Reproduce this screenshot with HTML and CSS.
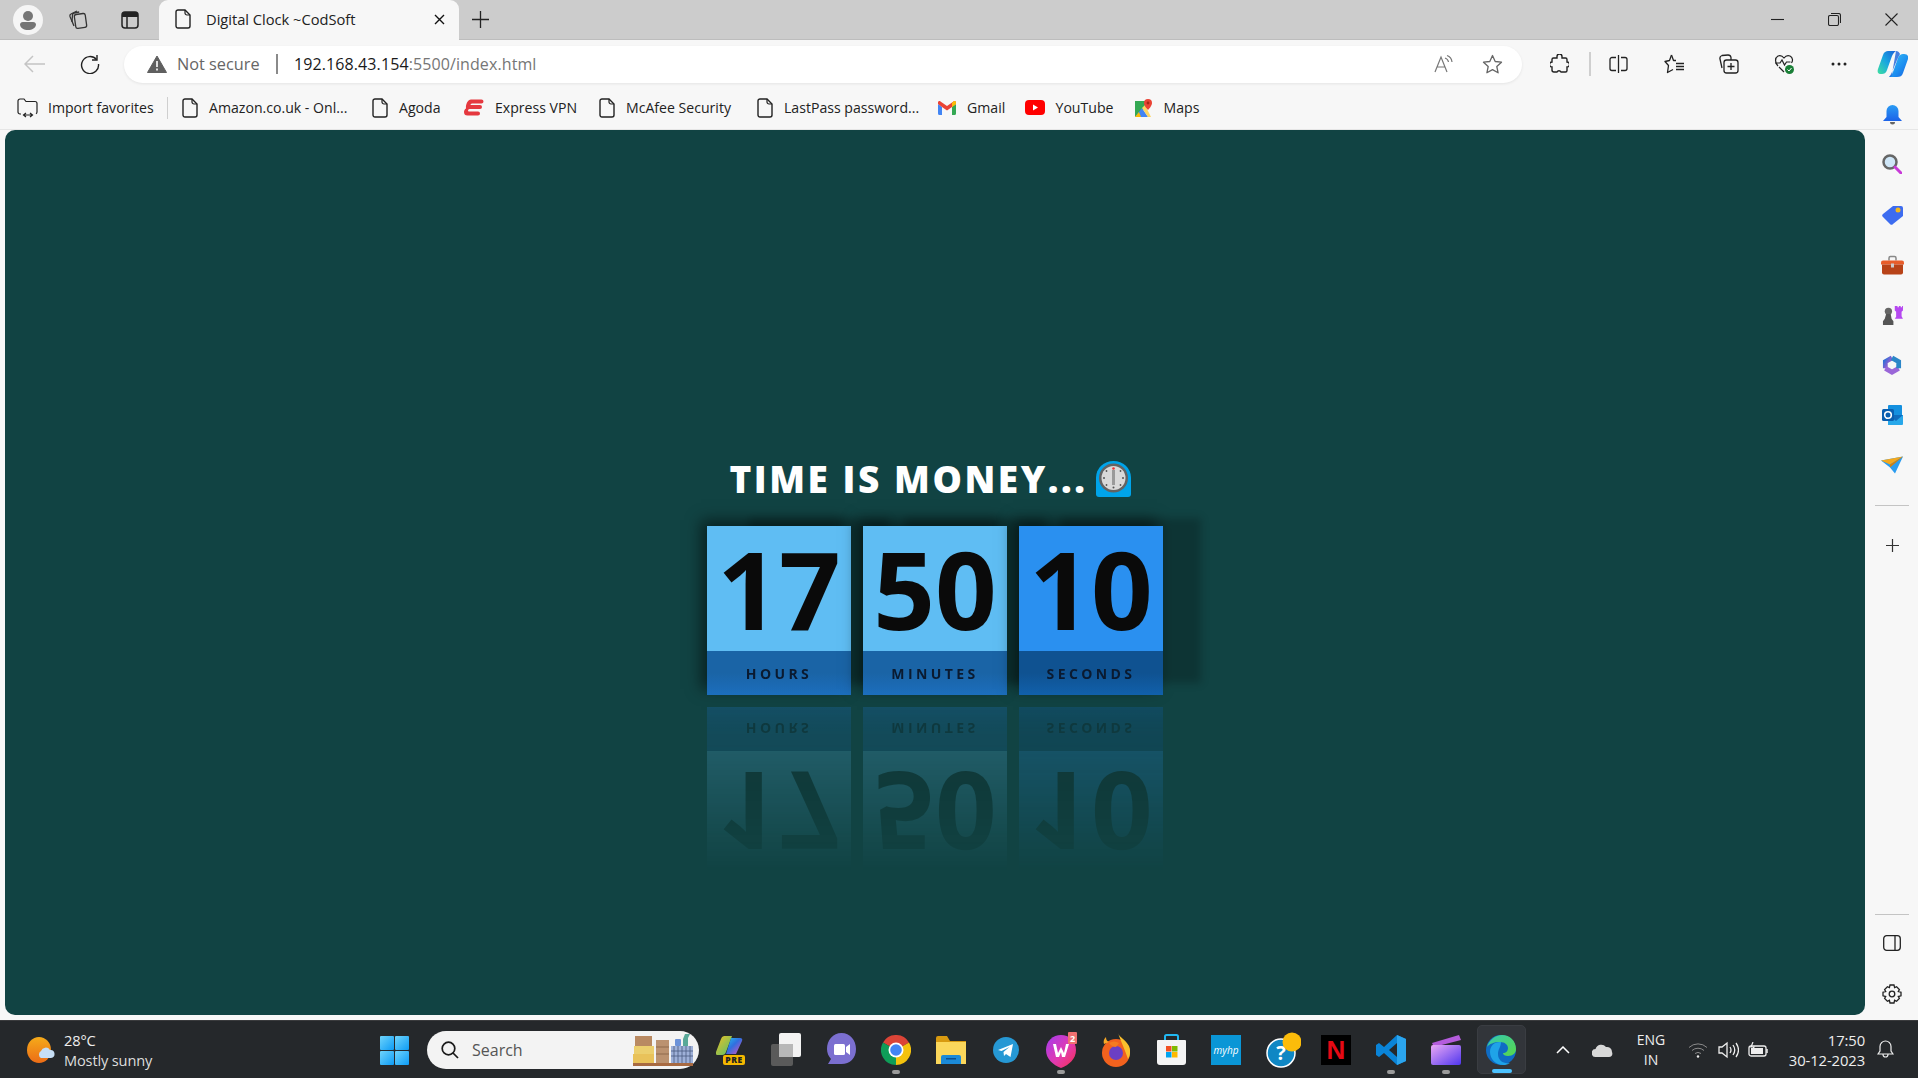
FILE: index.html
```html
<!DOCTYPE html>
<html lang="en">
<head>
<meta charset="utf-8">
<title>Digital Clock ~CodSoft</title>
<link rel="stylesheet" href="styles.css">
</head>
<body>
<svg class="defs" width="0" height="0" aria-hidden="true">
  <defs>
    <symbol id="doc" viewBox="0 0 16 20"><path d="M3 1h7l5 5v11a2 2 0 0 1-2 2H3a2 2 0 0 1-2-2V3a2 2 0 0 1 2-2z" fill="none" stroke="#222" stroke-width="1.4"/><path d="M10 1v3a2 2 0 0 0 2 2h3" fill="none" stroke="#222" stroke-width="1.2"/></symbol>
    <linearGradient id="gCop" x1="0" y1="1" x2="1" y2="0"><stop offset="0" stop-color="#3fe0a0"/><stop offset=".5" stop-color="#18a6e0"/><stop offset="1" stop-color="#1a5fd8"/></linearGradient>
    <linearGradient id="gCop2" x1="0" y1="0" x2="1" y2="1"><stop offset="0" stop-color="#39c4f4"/><stop offset=".6" stop-color="#1c8ef0"/><stop offset="1" stop-color="#1b5fdc"/></linearGradient>
    <linearGradient id="gBell" x1="0" y1="0" x2="0" y2="1"><stop offset="0" stop-color="#2a9cf4"/><stop offset="1" stop-color="#1c62e8"/></linearGradient>
    <linearGradient id="gWin" x1="0" y1="0" x2="1" y2="1"><stop offset="0" stop-color="#6fd4fb"/><stop offset="1" stop-color="#0d9bf5"/></linearGradient>
    <linearGradient id="gWea" x1="0" y1="0" x2="0" y2="1"><stop offset="0" stop-color="#f5ab1a"/><stop offset="1" stop-color="#ec6c16"/></linearGradient>
    <linearGradient id="gWps" x1="0" y1="0" x2="1" y2="1"><stop offset="0" stop-color="#a23cf0"/><stop offset=".55" stop-color="#e23ab0"/><stop offset="1" stop-color="#f5304f"/></linearGradient>
    <linearGradient id="gClip" x1="0" y1="0" x2="1" y2="1"><stop offset="0" stop-color="#eba8f5"/><stop offset="1" stop-color="#4f36ee"/></linearGradient>
    <linearGradient id="gEdge" x1="0" y1="0" x2="1" y2="1"><stop offset="0" stop-color="#35c8b0"/><stop offset="1" stop-color="#58d84a"/></linearGradient>
    <linearGradient id="gPre" x1="0" y1="0" x2="1" y2="1"><stop offset="0" stop-color="#28c0e8"/><stop offset=".45" stop-color="#2f6fe0"/><stop offset="1" stop-color="#e050c0"/></linearGradient>
    <linearGradient id="gPre2" x1="0" y1="0" x2="1" y2="1"><stop offset="0" stop-color="#f0c020"/><stop offset="1" stop-color="#50c070"/></linearGradient>
    <linearGradient id="gMs" x1="0" y1="0" x2="1" y2="1"><stop offset="0" stop-color="#2a70d8"/><stop offset=".5" stop-color="#8a60d0"/><stop offset="1" stop-color="#28b0d8"/></linearGradient>
  </defs>
</svg>

<div class="window">
  <header class="tabstrip">
    <div class="avatar"><svg width="30" height="30" viewBox="0 0 30 30"><circle cx="15" cy="15" r="15" fill="#f5f5f5"/><circle cx="15" cy="11" r="5" fill="#767676"/><path d="M7 19a3 3 0 0 1 3-2h10a3 3 0 0 1 3 2c0 4-4 6-8 6s-8-2-8-6z" fill="#767676"/></svg></div>
    <svg class="ws-icon" width="21" height="21" viewBox="0 0 21 21" fill="none" stroke="#333" stroke-width="1.3"><rect x="8" y="5" width="11" height="14" rx="2" transform="rotate(-8 13 12)"/><path d="M7 17 3 7.5a2 2 0 0 1 1-2.5l6-3"/><path d="M5 13 5.500 6a2 2 0 0 1 1.700-2l5-1"/></svg>
    <svg class="tl-icon" width="18" height="18" viewBox="0 0 18 18"><rect x="1" y="1" width="16" height="16" rx="3" fill="none" stroke="#222" stroke-width="1.500"/><path d="M1 4a3 3 0 0 1 3-3h10a3 3 0 0 1 3 3v2H1z" fill="#222"/><path d="M6 6v11" stroke="#222" stroke-width="1.500"/></svg>
    <div class="tab">
      <svg class="tab-doc" width="16" height="20"><use href="#doc"/></svg>
      <span class="tab-title">Digital Clock ~CodSoft</span>
      <svg class="tab-close" width="11" height="11" viewBox="0 0 11 11"><path d="M1 1l9 9M10 1l-9 9" stroke="#111" stroke-width="1.400"/></svg>
    </div>
    <svg class="tab-new" width="17" height="17" viewBox="0 0 17 17"><path d="M8.500 0v17M0 8.500h17" stroke="#222" stroke-width="1.300"/></svg>
    <div class="win-controls">
      <svg width="13" height="13" viewBox="0 0 13 13"><path d="M0 6.500h13" stroke="#222" stroke-width="1.100"/></svg>
      <svg width="13" height="13" viewBox="0 0 13 13" fill="none" stroke="#222" stroke-width="1.100"><rect x=".5" y="2.500" width="10" height="10" rx="1.500"/><path d="M3 .5h7.500a2 2 0 0 1 2 2V10"/></svg>
      <svg width="13" height="13" viewBox="0 0 13 13"><path d="M.5.5l12 12M12.500.5l-12 12" stroke="#222" stroke-width="1.100"/></svg>
    </div>
  </header>

  <nav class="toolbar">
    <svg class="tb-back" width="21" height="18" viewBox="0 0 21 18"><path d="M21 9H1M9 1 1 9l8 8" fill="none" stroke="#c4c4c4" stroke-width="1.500"/></svg>
    <svg class="tb-reload" width="20" height="20" viewBox="0 0 20 20" fill="none" stroke="#222" stroke-width="1.400"><path d="M16.500 5.500A8.500 8.500 0 1 0 18.500 10"/><path d="M17 1v5h-5"/></svg>
    <div class="address">
      <svg class="addr-warn" width="20" height="18" viewBox="0 0 20 18"><path d="M10 1 19.500 17.500H.5z" fill="#5f5f5f" stroke="#5f5f5f" stroke-linejoin="round"/><path d="M10 6v6M10 13.500v2" stroke="#fff" stroke-width="1.600"/></svg>
      <span class="addr-note">Not secure</span>
      <span class="addr-sep"></span>
      <span class="addr-url"><b class="addr-host">192.168.43.154</b>:5500/index.html</span>
      <svg class="addr-read" width="20" height="20" viewBox="0 0 20 20" fill="none" stroke="#777" stroke-width="1.200"><path d="M1 18 7 3l6 15M3.500 13h7"/><path d="M11 4q3 1 3.500 4M13 1.500q4.500 1.500 5 6.500"/></svg>
      <svg class="addr-star" width="21" height="20" viewBox="0 0 21 20"><path d="M10.500 1.500 13.200 7.500l6.300.7-4.700 4.300 1.300 6.300-5.600-3.200-5.600 3.200 1.300-6.300L1.500 8.200l6.300-.7z" fill="none" stroke="#666" stroke-width="1.300" stroke-linejoin="round"/></svg>
    </div>
    <svg class="tb-ext" width="19" height="20" viewBox="0 0 19 20"><path d="M7 2.500a2.500 2.500 0 0 1 5 0V4h3.500a1.500 1.500 0 0 1 1.500 1.500V8a2.500 2.500 0 0 1 0 5v3.500a1.500 1.500 0 0 1-1.500 1.500H11a2.200 2.200 0 0 0-4 0H4a2 2 0 0 1-2-2v-3a2.500 2.500 0 0 1 0-5V5.500A1.500 1.500 0 0 1 3.500 4H7z" fill="none" stroke="#222" stroke-width="1.400"/></svg>
    <span class="tb-sep"></span>
    <svg class="tb-split" width="19" height="20" viewBox="0 0 19 20" fill="none" stroke="#222" stroke-width="1.300"><path d="M7 3.500H3a2 2 0 0 0-2 2v9a2 2 0 0 0 2 2h4M12 3.500h4a2 2 0 0 1 2 2v9a2 2 0 0 1-2 2h-4M9.500 1v18"/></svg>
    <svg class="tb-fav" width="20" height="20" viewBox="0 0 20 20" fill="none" stroke="#222" stroke-width="1.300" stroke-linejoin="round"><path d="M7.500 1 5.500 6.500 1 7.500l3.500 4L3.500 18.500l5.500-3"/><path d="M7.500 1 9.500 6.500h2.500"/><path d="M12 9.500h8M12 12.500h8M12 15.500h8"/></svg>
    <svg class="tb-coll" width="20" height="20" viewBox="0 0 20 20" fill="none" stroke="#222" stroke-width="1.300"><rect x="5" y="6" width="14" height="13" rx="2.500"/><path d="M3 14 1 5a3 3 0 0 1 2-3.500L9 1a3 3 0 0 1 3 2.500V6M12 9v7M8.500 12.500h7"/></svg>
    <svg class="tb-health" width="20" height="20" viewBox="0 0 20 20"><path d="M4 12C1 9 .5 4 4 2c2.500-1 4.500 0 6 2 1.500-2 3.500-3 6-2 3 1.500 3 5 1.500 7M1 9h5l2-3 2.500 5 2-3h4M5 13l5 5" fill="none" stroke="#222" stroke-width="1.200"/><circle cx="15.500" cy="15.500" r="4.500" fill="#1a7f37"/><path d="M13.500 15.500l1.500 1.500 2.500-3" fill="none" stroke="#fff" stroke-width="1"/></svg>
    <svg class="tb-more" width="16" height="4" viewBox="0 0 16 4"><circle cx="2" cy="2" r="1.500" fill="#222"/><circle cx="8" cy="2" r="1.500" fill="#222"/><circle cx="14" cy="2" r="1.500" fill="#222"/></svg>
    <svg class="tb-copilot" width="31" height="28" viewBox="0 0 31 28"><path d="M11 1h8c-2 1-3 3-4 5L10 20c-1 3-3 4-5 4H4c-3 0-4-2-3-5L6 5c1-3 3-4 5-4z" fill="url(#gCop)"/><path d="M20 27h-8c2-1 3-3 4-5l5-14c1-3 3-4 5-4h1c3 0 5 2 4 5l-5 14c-1 3-3 4-6 4z" fill="url(#gCop2)"/><path d="M19 1c2 0 3 1 4 3l-1 2c-1 1-1 2-2 4l-5 12c-1 2-2 4-3 5 2 0 3-1 3-3z" fill="#1a5fd8" opacity=".8"/></svg>
  </nav>

  <nav class="bookmarks">
    <a class="bm bm-import"><svg width="21" height="20" viewBox="0 0 21 20" fill="none" stroke="#222" stroke-width="1.200"><path d="M4 16H3a2 2 0 0 1-2-2V3a2 2 0 0 1 2-2h4l2 2.500h9a2 2 0 0 1 2 2V14a2 2 0 0 1-1 1.700"/><path d="M7 17h8M9 15l-2.500 2L9 19M13 15l2.500 2L13 19"/></svg><span>Import favorites</span></a>
    <span class="bm-sep"></span>
    <a class="bm bm-amazon"><svg width="16" height="20"><use href="#doc"/></svg><span>Amazon.co.uk - Onl...</span></a>
    <a class="bm bm-agoda"><svg width="16" height="20"><use href="#doc"/></svg><span>Agoda</span></a>
    <a class="bm bm-vpn"><svg width="20" height="17" viewBox="0 0 20 17"><path d="M7 .5h10.500a2 2 0 0 1 0 4H8a1.500 1.500 0 0 0-1.500 1.500H16a2 2 0 0 1 0 4H5.500A1.500 1.500 0 0 0 4 11.500c0 .5.500 1 1 1H14a2 2 0 0 1 0 4H3.500A3.500 3.500 0 0 1 0 13c0-1.500.800-3 2-3.500C1.500 5 4 .5 7 .5z" fill="#e5383f"/></svg><span>Express VPN</span></a>
    <a class="bm bm-mcafee"><svg width="16" height="20"><use href="#doc"/></svg><span>McAfee Security</span></a>
    <a class="bm bm-lastpass"><svg width="16" height="20"><use href="#doc"/></svg><span>LastPass password...</span></a>
    <a class="bm bm-gmail"><svg width="18" height="14" viewBox="0 0 18 14"><path d="M0 3v9.500A1.500 1.500 0 0 0 1.500 14H4V6z" fill="#4285f4"/><path d="M14 14h2.500a1.500 1.500 0 0 0 1.500-1.500V3l-4 3z" fill="#34a853"/><path d="M0 3 4 6l5 3.500L14 6l4-3V1.500C18 .2 16.500-.4 15.500.4L9 5 2.500.4C1.500-.4 0 .2 0 1.500z" fill="#ea4335"/><path d="M14 6V2l1.500-1.600C16.500-.4 18 .2 18 1.500V3z" fill="#fbbc04"/></svg><span>Gmail</span></a>
    <a class="bm bm-yt"><svg width="20" height="15" viewBox="0 0 20 15"><rect width="20" height="15" rx="4" fill="#f00"/><path d="M8 4.500v6l5-3z" fill="#fff"/></svg><span>YouTube</span></a>
    <a class="bm bm-maps"><svg width="18" height="18" viewBox="0 0 18 18"><path d="M0 2h12v6L0 18z" fill="#34a853"/><path d="M0 18 7 9l6 9z" fill="#4285f4"/><path d="M0 18l4-5 2 5z" fill="#fbbc04"/><path d="M7 9l3-3 6 12h-3z" fill="#fdd663"/><path d="M13 0a4 4 0 0 1 4 4c0 3-4 7-4 7s-4-4-4-7a4 4 0 0 1 4-4z" fill="#ea4335"/><circle cx="13" cy="4" r="1.400" fill="#a52714"/></svg><span>Maps</span></a>
  </nav>

  <div class="body-row">
    <main class="page">
      <h1 class="headline">TIME IS MONEY...<svg class="timer" width="35" height="36" viewBox="0 0 35 36"><path d="M0 16.500a17.500 16.500 0 0 1 35 0V33a3 3 0 0 1-3 3H3a3 3 0 0 1-3-3z" fill="#00a4ea"/><circle cx="17.500" cy="17" r="14.500" fill="#636363"/><circle cx="17.500" cy="17" r="12" fill="#d9d9d9"/><rect x="16" y="9" width="3" height="15" fill="#9a9a9a"/><circle cx="17.500" cy="7.500" r="1.300" fill="#f03030"/><circle cx="17.500" cy="26.500" r="1" fill="#555"/><circle cx="8" cy="17" r="1" fill="#555"/><circle cx="27" cy="17" r="1" fill="#555"/><circle cx="10.500" cy="10" r=".9" fill="#555"/><circle cx="24.500" cy="10" r=".9" fill="#555"/><circle cx="10.500" cy="24" r=".9" fill="#555"/><circle cx="24.500" cy="24" r=".9" fill="#555"/></svg></h1>
      <div class="clock">
        <div class="card"><div class="num">17</div><div class="unit">HOURS</div></div>
        <div class="card"><div class="num">50</div><div class="unit">MINUTES</div></div>
        <div class="card card-sec"><div class="num">10</div><div class="unit">SECONDS</div></div>
      </div>
    </main>
    <aside class="sidebar">
      <svg class="sb-bell" width="19" height="20" viewBox="0 0 19 20"><path d="M9.500 0a6 6 0 0 1 6 6v6l3.500 4H0l3.500-4V6a6 6 0 0 1 6-6z" fill="url(#gBell)"/><path d="M7 17h5a2.500 2.500 0 0 1-5 0z" fill="#666"/></svg>
      <svg class="sb-search" width="20" height="20" viewBox="0 0 20 20"><circle cx="8" cy="8" r="6.500" fill="#cfe6f7" stroke="#666" stroke-width="2.500"/><path d="M13 13l6 6" stroke="#c83ad8" stroke-width="3" stroke-linecap="round"/></svg>
      <svg width="21" height="20" viewBox="0 0 21 20"><path d="M11 1h8a2 2 0 0 1 2 2v8L11 19a2 2 0 0 1-3 0L1 12a2 2 0 0 1 0-3z" fill="#3d6cf0"/><circle cx="16" cy="5" r="2.500" fill="#f3b81e"/></svg>
      <svg width="23" height="19" viewBox="0 0 23 19"><path d="M8 5V2.500A1.500 1.500 0 0 1 9.500 1h4A1.500 1.500 0 0 1 15 2.500V5" fill="none" stroke="#888" stroke-width="1.500"/><path d="M2 5h19a2 2 0 0 1 2 2v2H0V7a2 2 0 0 1 2-2z" fill="#e85d2a"/><path d="M1 9h21v8a2 2 0 0 1-2 2H3a2 2 0 0 1-2-2z" fill="#b84318"/><rect x="10" y="8" width="3" height="4" fill="#ccc"/></svg>
      <svg width="23" height="22" viewBox="0 0 23 22"><path d="M15 1h2v1.500h1.500V1h2v1.500H22V1h1v5l-1.500 1.500v5L23 15H14l1.500-2V7.500L14 6V1z" fill="#b548f0"/><circle cx="7" cy="7" r="4" fill="#666"/><path d="M4.500 10h5l1 5 2 3v4H1v-4l2-3z" fill="#555"/></svg>
      <svg width="20" height="21" viewBox="0 0 20 21" fill="none" stroke-width="5"><path d="M10 3 3 7v7" stroke="url(#gMs)"/><path d="M3 14l7 4 7-4" stroke="#9a66d8"/><path d="M17 14V7l-7-4" stroke="#2b86c8"/></svg>
      <svg width="21" height="20" viewBox="0 0 21 20"><rect x="6" y="0" width="14" height="18" rx="1" fill="#1490df"/><path d="M6 10h15v9a1 1 0 0 1-1 1H6z" fill="#28a8ea"/><path d="M6 10l15 0-7 6z" fill="#0f6cbd"/><rect y="4" width="12" height="12" rx="1.500" fill="#0a5fb0"/><circle cx="6" cy="10" r="3.300" fill="none" stroke="#fff" stroke-width="1.600"/></svg>
      <svg width="22" height="17" viewBox="0 0 22 17"><path d="M0 4 22 0 14 17 9 11z" fill="#2a9cf0"/><path d="M0 4 22 0 9 8z" fill="#f3a81e"/><path d="M9 8 22 0 9 11z" fill="#d08010"/></svg>
      <span class="sb-sep"></span>
      <svg class="sb-plus" width="13" height="13" viewBox="0 0 13 13"><path d="M6.500 0v13M0 6.500h13" stroke="#333" stroke-width="1.200"/></svg>
      <span class="sb-sep sb-sep-low"></span>
      <svg class="sb-panel" width="18" height="16" viewBox="0 0 18 16" fill="none" stroke="#222" stroke-width="1.300"><rect x=".7" y=".7" width="16.600" height="14.600" rx="3"/><path d="M12 .7v14.600"/></svg>
      <svg class="sb-gear" width="20" height="20" viewBox="0 0 20 20" fill="none" stroke="#222" stroke-width="1.300"><path d="M8 1h4l.6 2.600 2-.9 2.800 2.800-1.100 2 2.700.7v3.600l-2.700.7 1.100 2-2.800 2.800-2-1-.6 2.700H8l-.6-2.700-2 1-2.800-2.800 1.100-2L1 11.800V8.200l2.700-.7-1.100-2 2.800-2.800 2 .9z"/><circle cx="10" cy="10" r="2.800"/></svg>
    </aside>
  </div>

  <footer class="taskbar">
    <div class="weather">
      <svg width="28" height="26" viewBox="0 0 28 26"><ellipse cx="12" cy="13" rx="12" ry="13" fill="url(#gWea)"/><path d="M14 21a4 4 0 0 1 0-7 5 5 0 0 1 9-1 4 4 0 0 1 1 8z" fill="#c6def5"/></svg>
      <div class="weather-text"><span>28°C</span><span class="weather-sub">Mostly sunny</span></div>
    </div>
    <svg class="start" width="29" height="29" viewBox="0 0 29 29"><rect width="14" height="14" rx="1" fill="url(#gWin)"/><rect x="15" width="14" height="14" rx="1" fill="url(#gWin)"/><rect y="15" width="14" height="14" rx="1" fill="url(#gWin)"/><rect x="15" y="15" width="14" height="14" rx="1" fill="url(#gWin)"/></svg>
    <div class="search">
      <svg width="18" height="18" viewBox="0 0 18 18" fill="none" stroke="#1a1a1a" stroke-width="1.700"><circle cx="7.500" cy="7.500" r="6.300"/><path d="M12 12l5 5"/></svg>
      <span class="search-text">Search</span>
      <svg class="search-art" width="62" height="34" viewBox="0 0 62 34"><rect x="2" y="3" width="17" height="10" fill="#b98a62"/><rect x="1" y="13" width="20" height="8" fill="#eccf6e"/><rect x="0" y="21" width="21" height="9" fill="#e9c25a"/><rect x="23" y="7" width="13" height="23" fill="#bb9270"/><path d="M23 14h13M23 21h13" stroke="#8f6a4c"/><rect x="38" y="13" width="22" height="17" fill="#9eb0d8"/><path d="M41 13v17M45 13v17M49 13v17M53 13v17M57 13v17M38 18h22M38 23h22" stroke="#4a5a80" stroke-width=".8"/><rect x="42" y="6" width="6" height="7" rx="1" fill="#6c92d8"/><path d="M52 1h5l-2 4v8h-5V6z" fill="#58a898"/><rect x="0" y="30" width="60" height="3" fill="#a86a42"/></svg>
    </div>
    <div class="apps">
      <div class="app"><svg width="30" height="30" viewBox="0 0 30 30"><path d="M8 1h8L10 17a4 4 0 0 1-4 3H2a2 2 0 0 1-2-3L5 4a4 4 0 0 1 3-3z" fill="url(#gPre2)"/><path d="M10 19h10l6-13a2 2 0 0 0-2-3H15z" fill="url(#gPre)"/><rect x="7" y="20" width="22" height="10" rx="2" fill="#f5b800"/><text class="pre" x="18" y="28.300" text-anchor="middle">PRE</text></svg></div>
      <div class="app"><svg width="30" height="33" viewBox="0 0 30 33"><rect x="0" y="11" width="22" height="22" rx="2" fill="#5a5a5a"/><rect x="8" y="0" width="22" height="24" rx="2" fill="#f3f3f3"/><rect x="8" y="11" width="14" height="13" fill="#b8b8b8"/></svg></div>
      <div class="app"><svg width="29" height="34" viewBox="0 0 29 34"><path d="M14.500 0C23 0 29 7 29 16s-6 15-14.500 15H1l3-5C1.500 23 0 20 0 16 0 7 6 0 14.500 0z" fill="#7b6fd0"/><rect x="7" y="11" width="11" height="11" rx="1.500" fill="#fff"/><path d="M19 14l4-3v11l-4-3z" fill="#fff"/></svg></div>
      <div class="app app-run"><svg width="30" height="30" viewBox="0 0 30 30"><path d="M15 15 2 7.500A15 15 0 0 1 28 7.500z" fill="#db4437"/><path d="M15 15 28 7.500A15 15 0 0 1 15 30z" fill="#f4c20d"/><path d="M15 15 15 30A15 15 0 0 1 2 7.500z" fill="#0f9d58"/><circle cx="15" cy="15" r="7.500" fill="#fff"/><circle cx="15" cy="15" r="5.800" fill="#4285f4"/></svg></div>
      <div class="app"><svg width="30" height="28" viewBox="0 0 30 28"><path d="M0 2a2 2 0 0 1 2-2h9l3 5h16v5H0z" fill="#d89a10"/><path d="M0 6h30v22H0z" fill="#fbd75b"/><path d="M5 28v-7a2 2 0 0 1 2-2h16a2 2 0 0 1 2 2v7z" fill="#1b8ad8"/><rect x="10" y="22" width="10" height="1.500" fill="#0b4f90"/></svg></div>
      <div class="app"><svg width="26" height="26" viewBox="0 0 26 26"><circle cx="13" cy="13" r="13" fill="#2698d4"/><path d="M5 13 20 7l-2.500 13-4.500-3-2 2-.5-4 6-5-8 4z" fill="#fff"/></svg></div>
      <div class="app app-run"><svg width="31" height="36" viewBox="0 0 31 36"><path d="M15 3c8 0 15 6 15 15s-7 15-15 18C7 33 0 27 0 18S7 3 15 3z" fill="url(#gWps)"/><path d="M7 12h3l2 9 3-6 3 6 2-9h3l-4 13h-3l-1-5-2 5h-3z" fill="#fff"/><rect x="22" y="0" width="9" height="12" rx="1" fill="#f07070"/><text class="wps-badge" x="26.500" y="10" text-anchor="middle">2</text></svg></div>
      <div class="app"><svg width="28" height="34" viewBox="0 0 28 34"><circle cx="14" cy="20" r="14" fill="#f2621e"/><path d="M16 0c1 4 8 7 11 13 2 5 1 10-1 13-3-9-6-15-10-26z" fill="#fbc02d"/><path d="M2 11c-1-3 0-5 2-7 0 3 1 4 3 5z" fill="#f9a825"/><circle cx="14" cy="20" r="7" fill="#6b3fc4"/><path d="M7 10q5-3 10 0l-3 4q-4 0-7-4z" fill="#f57c20"/></svg></div>
      <div class="app"><svg width="29" height="31" viewBox="0 0 29 31"><path d="M8 6V2.500a1.500 1.500 0 0 1 1.500-1.500h10A1.500 1.500 0 0 1 21 2.500V6" fill="none" stroke="#21b8f2" stroke-width="2"/><path d="M1 6h27a1 1 0 0 1 1 1v21a3 3 0 0 1-3 3H3a3 3 0 0 1-3-3V7a1 1 0 0 1 1-1z" fill="#f4f4f4"/><rect x="9" y="12" width="5.500" height="5.500" fill="#f25022"/><rect x="15" y="12" width="5.500" height="5.500" fill="#7fba00"/><rect x="9" y="18" width="5.500" height="5.500" fill="#00a4ef"/><rect x="15" y="18" width="5.500" height="5.500" fill="#ffb900"/></svg></div>
      <div class="app"><svg width="30" height="30" viewBox="0 0 30 30"><rect width="30" height="30" fill="#0a96d6"/><text class="myhp" x="15" y="19" text-anchor="middle">myhp</text></svg></div>
      <div class="app"><svg width="40" height="36" viewBox="0 0 40 36"><circle cx="20" cy="21" r="14" fill="#0f87c4" stroke="#fff" stroke-width="1.500"/><text class="help-q" x="20" y="28" text-anchor="middle">?</text><circle cx="31" cy="10" r="9.500" fill="#fbbc0a"/></svg></div>
      <div class="app"><svg width="30" height="30" viewBox="0 0 30 30"><rect width="30" height="30" fill="#000"/><text class="nflx" x="15" y="24" text-anchor="middle">N</text></svg></div>
      <div class="app app-run"><svg width="30" height="30" viewBox="0 0 30 30"><path d="M21 0l9 4v22l-9 4L8 18l-5 4-3-2V10l3-2 5 4z" fill="#0a84d8"/><path d="M21 0l9 4v22l-9 4z" fill="#2ba5ee"/><path d="M21 8v14l-8-7z" fill="#25282b"/></svg></div>
      <div class="app app-run"><svg width="30" height="31" viewBox="0 0 30 31"><path d="M1 9 28 1l2 5L3 13z" fill="#b45cdc"/><rect x="0" y="11" width="30" height="20" rx="2" fill="url(#gClip)"/></svg></div>
      <div class="app app-active"><svg width="30" height="30" viewBox="0 0 30 30"><circle cx="15" cy="15" r="15" fill="#0f6cc4"/><path d="M1 12C3 5 9 0 16 0c8 0 14 6 14 14 0 4-3 7-8 7-3 0-5-1-5-3 3 0 5-2 5-5s-3-6-8-6c-6 0-11 2-13 5z" fill="url(#gEdge)"/><path d="M14 7c-6 0-10 4-10 10 0 7 6 13 13 13 3 0 5-.5 7-2-6 1-12-2-12-9 0-5 3-7 3-12z" fill="#1fa3e8"/></svg></div>
    </div>
    <div class="tray">
      <svg class="tr-chev" width="14" height="8" viewBox="0 0 14 8"><path d="M1 7l6-6 6 6" fill="none" stroke="#fff" stroke-width="1.500"/></svg>
      <svg class="tr-cloud" width="21" height="14" viewBox="0 0 21 14"><path d="M4 14a4 4 0 0 1-.5-8A6 6 0 0 1 14 4a5 5 0 0 1 6 5c1 2.500 0 5-3 5z" fill="#d8d8d8"/></svg>
      <div class="tr-lang"><span>ENG</span><span>IN</span></div>
      <svg class="tr-wifi" width="20" height="16" viewBox="0 0 20 16" fill="none" stroke="#8a8a8a" stroke-width="1"><path d="M1 5.500a13 13 0 0 1 18 0M4 8.500a9 9 0 0 1 12 0M7 11.500a5 5 0 0 1 6 0"/><circle cx="10" cy="14.500" r="1.200" fill="#eee" stroke="none"/></svg>
      <svg class="tr-vol" width="21" height="18" viewBox="0 0 21 18" fill="none" stroke="#eee" stroke-width="1.300"><path d="M1 6v6h3l5 4V2L4 6z"/><path d="M12 6q2 3 0 6M15 4q3.500 5 0 10M18 2q5 7 0 14"/></svg>
      <svg class="tr-bat" width="20" height="16" viewBox="0 0 20 16"><path d="M3 4H16a2 2 0 0 1 2 2v6a2 2 0 0 1-2 2H3a2 2 0 0 1-2-2V6a2 2 0 0 1 2-2z" fill="none" stroke="#eee" stroke-width="1.300"/><path d="M3 6h12v6H3z" fill="#eee"/><path d="M19 7v4" stroke="#eee" stroke-width="1.500"/><path d="M5 0 3 5h3L4 9" fill="none" stroke="#eee" stroke-width="1.200"/></svg>
      <div class="tr-clock"><span>17:50</span><span>30-12-2023</span></div>
      <svg class="tr-bell" width="17" height="19" viewBox="0 0 17 19"><path d="M8.500 1a5.500 5.500 0 0 1 5.500 5.500V11l2 3H1l2-3V6.500A5.500 5.500 0 0 1 8.500 1zM6 14.500a2.500 2.500 0 0 0 5 0" fill="none" stroke="#eee" stroke-width="1.200"/></svg>
    </div>
  </footer>
</div>
</body>
</html>
```

FILE: styles.css
```css
* { box-sizing: border-box; }
html, body { margin: 0; padding: 0; height: 100%; overflow: hidden; }
body { font-family: "Open Sans", "Liberation Sans", sans-serif; background: #f7f7f7; color: #222; }
.defs { display: block; height: 0; }
svg { flex: none; display: block; }
.window { width: 1918px; height: 1078px; display: flex; flex-direction: column; }

/* tab strip */
.tabstrip { height: 40px; background: #cccccc; display: flex; align-items: center; padding-left: 13px; border-bottom: 1px solid #bdbdbd; }
.avatar { width: 30px; height: 30px; }
.ws-icon { margin-left: 24px; }
.tl-icon { margin-left: 33px; }
.tab { align-self: flex-start; width: 300px; height: 40px; margin-left: 20px; background: #f7f7f7; border-radius: 9px 9px 0 0; display: flex; align-items: center; padding: 0 0 2px 16px; }
.tab-title { margin-left: 15px; font-size: 14.700px; color: #222; width: 228px; white-space: nowrap; letter-spacing: -.02px; }
.tab-new { margin-left: 13px; }
.win-controls { margin-left: auto; display: flex; align-items: center; gap: 44px; padding-right: 20px; }

/* toolbar */
.toolbar { height: 48px; display: flex; align-items: center; padding-left: 24px; }
.tb-reload { margin-left: 35px; }
.address { width: 1398px; height: 37px; margin-left: 24px; background: #fff; border-radius: 19px; display: flex; align-items: center; padding: 0 19px 0 23px; box-shadow: 0 1px 3px rgba(0,0,0,.08); }
.addr-note { margin-left: 10px; font-size: 16.300px; color: #666; width: 83px; white-space: nowrap; }
.addr-sep { width: 2px; height: 20px; background: #8a8a8a; margin-left: 16px; }
.addr-url { margin-left: 16px; font-size: 16px; color: #767676; letter-spacing: .1px; white-space: nowrap; }
.addr-host { font-weight: 400; color: #1a1a1a; }
.addr-read { margin-left: auto; }
.addr-star { margin-left: 28px; }
.tb-ext { margin-left: 28px; }
.tb-sep { width: 2px; height: 24px; background: #cfcfcf; margin-left: 20px; }
.tb-split { margin-left: 18px; }
.tb-fav { margin-left: 36px; }
.tb-coll { margin-left: 35px; }
.tb-health { margin-left: 35px; }
.tb-more { margin-left: 37px; }
.tb-copilot { margin-left: 30px; }

/* bookmarks */
.bookmarks { height: 42px; display: flex; align-items: center; padding: 0 0 2px 17px; gap: 22px; border-bottom: 1px solid #e6e6e6; }
.bm { display: flex; align-items: center; gap: 11px; font-size: 14.100px; color: #222; white-space: nowrap; }
.bm-sep { width: 1px; height: 22px; background: #cfcfcf; margin: 0 -7.500px; }
.bm-import { gap: 10px; }
.bm-import span { width: 104px; }
.bm-amazon span { width: 141px; }
.bm-agoda span { width: 43px; }
.bm-vpn span { width: 82px; }
.bm-mcafee span { width: 109px; }
.bm-lastpass span { width: 132px; }
.bm-gmail span { width: 35.500px; }
.bm-yt span { width: 57px; }
.bm-maps span { width: 36px; }

/* content */
.body-row { height: 885px; display: flex; }
.page { width: 1860px; margin-left: 5px; background: #114343; border-radius: 10px; display: flex; flex-direction: column; align-items: center; padding-top: 316px; overflow: hidden; }
.headline { margin: 0 0 15px; display: flex; align-items: center; gap: 8px; height: 65px; padding-right: 10px; font-size: 37px; line-height: 65px; font-weight: 800; letter-spacing: 2.550px; color: #fff; white-space: nowrap; }
.clock { display: flex; gap: 12px; }
.card { width: 144px; height: 169px; box-shadow: 40px -10px 8px -2px rgba(0,0,0,.22), -6px -6px 14px rgba(0,0,0,.5); -webkit-box-reflect: below 12px linear-gradient(transparent 3%, rgba(255,255,255,.28)); }
.num { height: 125px; background: #5fbdf3; color: #0a0a0a; font-size: 108px; font-weight: 700; line-height: 125px; text-align: center; }
.unit { height: 44px; background: linear-gradient(#1a64a6 50%, #1c6ebd); color: #0a1a30; font-size: 14px; font-weight: 700; line-height: 46px; letter-spacing: 3.400px; text-align: center; }
.card-sec .num { background: #2a90f0; }
.card-sec .unit { background: linear-gradient(#0f5291 50%, #1160ab); }

/* sidebar */
.sidebar { width: 53px; display: flex; flex-direction: column; align-items: center; padding-left: 1px; }
.sidebar > svg { height: 20px; margin-bottom: 30px; }
.sidebar > .sb-bell { height: 20px; margin-top: -25px; margin-bottom: 29px; }
.sidebar > .sb-search { margin-bottom: 31px; }
.sb-sep { flex: none; width: 34px; height: 1px; background: #c4c4c4; margin-bottom: 33px; }
.sidebar > .sb-plus { height: 13px; margin-bottom: 0; }
.sb-sep-low { margin-top: 362px; margin-bottom: 20px; }
.sidebar > .sb-panel { height: 16px; margin-bottom: 33px; }

/* taskbar */
.taskbar { margin-top: 5px; height: 58px; background: #25282b; border-top: 1px solid #3a3b3d; display: flex; align-items: center; color: #eee; }
.weather { width: 380px; padding-left: 27px; display: flex; align-items: center; gap: 9px; }
.weather-text { display: flex; flex-direction: column; font-size: 14.600px; line-height: 20px; letter-spacing: -.15px; }
.weather-sub { color: #ddd; }
.start { margin-top: 1px; }
.search { width: 272px; height: 38px; margin-left: 18px; background: #f3f3f3; border-radius: 19px; display: flex; align-items: center; padding-left: 14px; padding-right: 4px; }
.search-text { margin-left: 13px; font-size: 16px; color: #555; }
.search-art { margin-left: auto; }
.apps { display: flex; margin-left: 4.500px; }
.app { width: 55px; height: 49px; display: flex; align-items: center; justify-content: center; position: relative; }
.app-run::after { content: ""; position: absolute; left: 23.500px; bottom: 0; width: 8px; height: 4px; border-radius: 2px; background: #9a9a9a; }
.app-active { background: #32353a; border-radius: 5px; border: 1px solid #3a3d42; width: 49px; margin-left: 3px; margin-right: 3px; }
.app-active::after { content: ""; position: absolute; left: 14px; bottom: 0; width: 20px; height: 4px; border-radius: 2px; background: #4cc2ff; }
.pre { font: 800 8.500px "Open Sans", sans-serif; letter-spacing: .5px; fill: #222; }
.wps-badge { font: 700 9px "Open Sans", sans-serif; fill: #fff; }
.myhp { font: italic 400 10px "Open Sans", sans-serif; fill: #fff; }
.help-q { font: 700 20px "Open Sans", sans-serif; fill: #fff; }
.nflx { font: 700 26px "Liberation Sans", sans-serif; fill: #e50914; }
.tray { display: flex; align-items: center; margin-left: 27.500px; }
.tr-cloud { margin-left: 22px; }
.tr-lang { width: 40px; margin-left: 18px; display: flex; flex-direction: column; align-items: center; font-size: 14px; line-height: 20px; }
.tr-wifi { margin-left: 17px; }
.tr-vol { margin-left: 10px; }
.tr-bat { margin-left: 9px; }
.tr-clock { width: 90px; margin-left: 7px; display: flex; flex-direction: column; align-items: flex-end; font-size: 14.800px; line-height: 20px; letter-spacing: -.1px; }
.tr-bell { margin-left: 12px; }
```
